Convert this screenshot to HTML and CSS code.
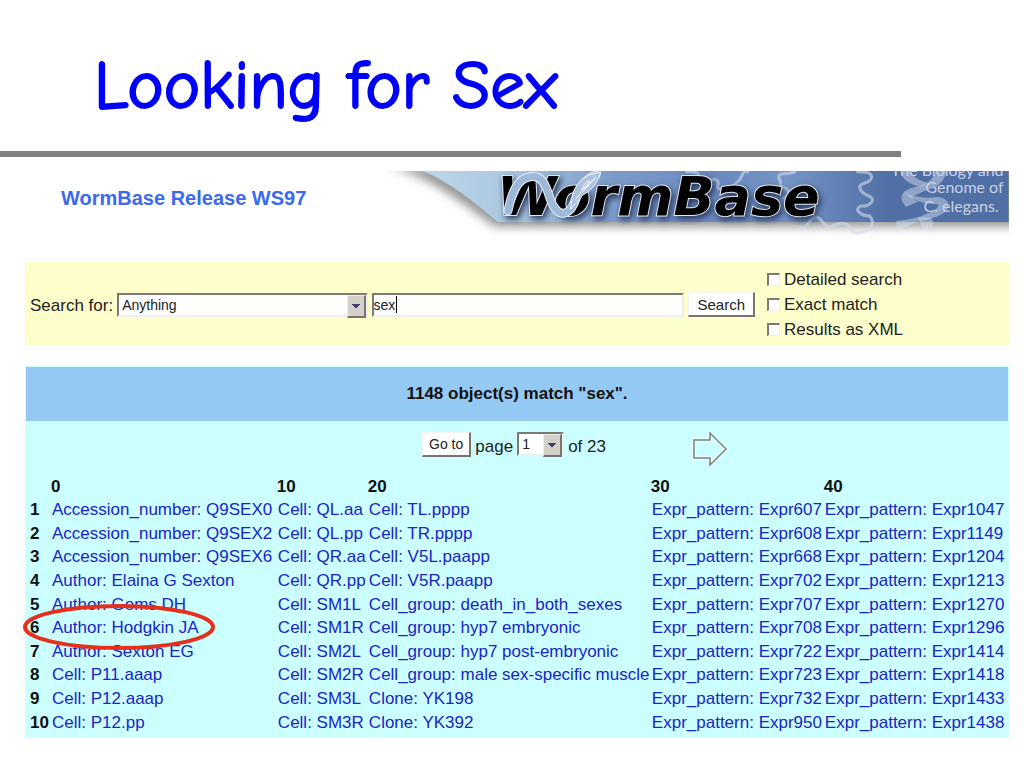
FILE: index.html
```html
<!DOCTYPE html>
<html lang="en">
<head>
    <meta charset="UTF-8">
    <meta name="viewport" content="width=device-width, initial-scale=1.0">
    <title>Looking for Sex</title>
    <link rel="stylesheet" href="styles.css">
</head>
<body>
    <header class="slide-header">
        <h1>Looking for Sex</h1>
    </header>

    <main class="content">
        <div class="banner">
            <h2>WormBase Release WS97</h2>
            <svg class="logo" viewBox="0 0 640 66" role="img" aria-label="WormBase">
                <defs>
                    <linearGradient id="sky" x1="0" x2="1">
                        <stop offset="0" stop-color="#bdd5e8"/>
                        <stop offset="0.15" stop-color="#abc8e0"/>
                        <stop offset="0.32" stop-color="#7d9bc9"/>
                        <stop offset="0.5" stop-color="#6b89bf"/>
                        <stop offset="0.62" stop-color="#7394c5"/>
                        <stop offset="0.8" stop-color="#506fa5"/>
                        <stop offset="1" stop-color="#506fa5"/>
                    </linearGradient>
                    <filter id="soft" x="-10%" y="-40%" width="120%" height="180%">
                        <feGaussianBlur stdDeviation="5"/>
                    </filter>
                </defs>
                <!-- drop shadow -->
                <path d="M15 -4C55 0 95 34 126 56H660V-4Z" fill="#999" filter="url(#soft)"/>
                <path d="M54 0H640V51H129C105 31 82 12 54 0Z" fill="url(#sky)"/>
                <!-- worm tracks -->
                <g fill="none" stroke="#d2dced" stroke-width="3" stroke-linecap="round" stroke-opacity="0.6">
                    <path d="M318 1Q330 0 330 5T342 9Q351 7 349 14T361 16Q370 12 373 5T379 1"/>
                    <path d="M426 1Q420 3 412 3Q408 5 412 11Q410 15 418 18Q423 24 415 27"/>
                    <path d="M489 1C509 0 504 11 496 12C486 15 493 22 500 25C509 29 500 36 492 35C484 39 493 45 501 45C508 52 501 60 493 61C486 64 482 60 480 55C475 49 466 54 463 55C455 58 454 47 448 46C441 44 439 60 432 56"/>
                </g>
                <!-- helix -->
                <g fill="#dce4f1" fill-opacity="0.45" transform="translate(515 -6) scale(0.333)">
                    <path d="M50 18H80Q86 40 132 54L112 66Q56 54 50 18Z"/>
                    <path d="M155 18H188Q184 52 150 68Q108 82 86 96Q86 104 104 110L68 126Q46 106 58 84Q72 68 112 62Q150 48 155 18Z"/>
                    <path d="M62 82Q100 104 168 96Q200 104 194 128Q184 152 130 164Q76 176 38 204V168Q96 164 140 142Q168 128 164 118Q96 118 62 82Z"/>
                    <path d="M104 158Q112 188 130 200Q144 194 150 174L142 158Z"/>
                </g>
                <g class="tagline">
                    <text x="635" y="5" text-anchor="end">The Biology and</text>
                    <text x="635" y="22" text-anchor="end">Genome of</text>
                    <text x="630" y="41" text-anchor="end">C. elegans.</text>
                </g>
                <text class="wordmark" x="128" y="44">WormBase</text>
                <!-- worm over the W and the o -->
                <g fill="none" stroke-linecap="round">
                    <path d="M139 40C143 20 149 8 160 6C178 2 178 24 184 34C193 50 203 40 207 28C211 15 217 8 227 4" stroke="#e7f0f8" stroke-width="9"/>
                    <path d="M139 40C143 20 149 8 160 6C178 2 178 24 184 34C193 50 203 40 207 28C211 15 217 8 227 4" stroke="#9db9da" stroke-width="7"/>
                    <path d="M203 27Q205 12 220 4L232 1Q227 18 214 24Q208 32 202 38Z" fill="#a9c1dd" stroke="#f2f7fb"/>
                    <path d="M213 18Q215 12 219 10T216 16T222 11T214 21M207 28L213 20" stroke="#f2f7fb"/>
                </g>
            </svg>
        </div>

        <form class="search" onsubmit="return false">
            <div class="search-fields">
                <label for="scope">Search for:</label>
                <span class="select-box scope-box">
                    <select id="scope">
                        <option>Anything</option>
                    </select>
                </span>
                <span class="query-box">
                    <input type="text" id="query" value="sex" aria-label="Query">
                    <span class="caret"></span>
                </span>
                <button type="submit" class="btn">Search</button>
            </div>
            <div class="options">
                <label><input type="checkbox" name="detailed">Detailed search</label>
                <label><input type="checkbox" name="exact">Exact match</label>
                <label><input type="checkbox" name="xml">Results as XML</label>
            </div>
        </form>

        <section class="results">
            <h3>1148 object(s) match "sex".</h3>
            <div class="pager">
                <div class="pager-form">
                    <button type="button" class="btn goto">Go to</button>
                    <label for="page">page</label>
                    <span class="select-box page-box">
                        <select id="page">
                            <option>1</option>
                        </select>
                    </span>
                    <span class="total">of 23</span>
                </div>
                <a class="next" href="#" aria-label="Next page">
                    <svg width="36" height="36" viewBox="0 0 36 36" fill="none">
                        <path d="M2 9H18V2L34 18L18 34V27H2Z" stroke="#fff" stroke-width="3"/>
                        <path d="M2 9H18V2L34 18L18 34V27H2Z" stroke="#777f7f" stroke-width="1.5"/>
                    </svg>
                </a>
            </div>
            <table>
                <colgroup>
                    <col class="col-row">
                    <col class="col-0">
                    <col class="col-10">
                    <col class="col-20">
                    <col class="col-30">
                    <col class="col-40">
                </colgroup>
                <thead>
                    <tr><th></th><th>0</th><th>10</th><th>20</th><th>30</th><th>40</th></tr>
                </thead>
                <tbody>
                    <tr><th>1</th><td><a href="#">Accession_number: Q9SEX0</a></td><td><a href="#">Cell: QL.aa</a></td><td><a href="#">Cell: TL.pppp</a></td><td><a href="#">Expr_pattern: Expr607</a></td><td><a href="#">Expr_pattern: Expr1047</a></td></tr>
                    <tr><th>2</th><td><a href="#">Accession_number: Q9SEX2</a></td><td><a href="#">Cell: QL.pp</a></td><td><a href="#">Cell: TR.pppp</a></td><td><a href="#">Expr_pattern: Expr608</a></td><td><a href="#">Expr_pattern: Expr1149</a></td></tr>
                    <tr><th>3</th><td><a href="#">Accession_number: Q9SEX6</a></td><td><a href="#">Cell: QR.aa</a></td><td><a href="#">Cell: V5L.paapp</a></td><td><a href="#">Expr_pattern: Expr668</a></td><td><a href="#">Expr_pattern: Expr1204</a></td></tr>
                    <tr><th>4</th><td><a href="#">Author: Elaina G Sexton</a></td><td><a href="#">Cell: QR.pp</a></td><td><a href="#">Cell: V5R.paapp</a></td><td><a href="#">Expr_pattern: Expr702</a></td><td><a href="#">Expr_pattern: Expr1213</a></td></tr>
                    <tr><th>5</th><td><a href="#">Author: Gems DH</a></td><td><a href="#">Cell: SM1L</a></td><td><a href="#">Cell_group: death_in_both_sexes</a></td><td><a href="#">Expr_pattern: Expr707</a></td><td><a href="#">Expr_pattern: Expr1270</a></td></tr>
                    <tr>
                        <th>6</th>
                        <td class="marked">
                            <a href="#">Author: Hodgkin JA</a>
                            <svg class="ring" width="192" height="48" viewBox="0 0 192 48"><ellipse cx="96" cy="24" rx="94" ry="21" fill="none" stroke="#e6301c" stroke-width="4"/></svg>
                        </td>
                        <td><a href="#">Cell: SM1R</a></td><td><a href="#">Cell_group: hyp7 embryonic</a></td><td><a href="#">Expr_pattern: Expr708</a></td><td><a href="#">Expr_pattern: Expr1296</a></td>
                    </tr>
                    <tr><th>7</th><td><a href="#">Author: Sexton EG</a></td><td><a href="#">Cell: SM2L</a></td><td><a href="#">Cell_group: hyp7 post-embryonic</a></td><td><a href="#">Expr_pattern: Expr722</a></td><td><a href="#">Expr_pattern: Expr1414</a></td></tr>
                    <tr><th>8</th><td><a href="#">Cell: P11.aaap</a></td><td><a href="#">Cell: SM2R</a></td><td><a href="#">Cell_group: male sex-specific muscle</a></td><td><a href="#">Expr_pattern: Expr723</a></td><td><a href="#">Expr_pattern: Expr1418</a></td></tr>
                    <tr><th>9</th><td><a href="#">Cell: P12.aaap</a></td><td><a href="#">Cell: SM3L</a></td><td><a href="#">Clone: YK198</a></td><td><a href="#">Expr_pattern: Expr732</a></td><td><a href="#">Expr_pattern: Expr1433</a></td></tr>
                    <tr><th>10</th><td><a href="#">Cell: P12.pp</a></td><td><a href="#">Cell: SM3R</a></td><td><a href="#">Clone: YK392</a></td><td><a href="#">Expr_pattern: Expr950</a></td><td><a href="#">Expr_pattern: Expr1438</a></td></tr>
                </tbody>
            </table>
        </section>
    </main>
</body>
</html>
```
FILE: styles.css
```css
* {
    margin: 0;
    padding: 0;
    box-sizing: border-box;
}

body {
    font-family: "Liberation Sans", Arial, sans-serif;
    font-size: 17px;
    line-height: 24px;
    color: #222;
    background: #fff;
}

.slide-header {
    width: 88%;
    padding: 44px 0 23px 94px;
    border-bottom: 6px solid #808080;
}

.slide-header h1 {
    font-family: "Comic Sans MS", "Comic Neue", Lato, sans-serif;
    font-size: 69px;
    font-weight: 400;
    line-height: 84px;
    color: #0000fa;
    -webkit-text-stroke: 2px #0000fa;
}

.content {
    padding: 14px 15px 28px 25px;
}

/* Banner */

.banner {
    display: flex;
    justify-content: space-between;
}

.banner h2 {
    padding: 15px 0 0 36px;
    font-size: 20px;
    color: #3b6af0;
    white-space: nowrap;
}

.logo {
    width: 65%;
    display: block;
}

.wordmark {
    font-family: "DejaVu Sans", Verdana, sans-serif;
    font-size: 54px;
    font-weight: bold;
    font-style: oblique;
    fill: #000;
    stroke: #dfe7f2;
    stroke-width: 2px;
    paint-order: stroke;
    filter: drop-shadow(2px 3px 3px #26375c);
}

.tagline {
    font-family: Lato, sans-serif;
    font-size: 16px;
    fill: #c9d3e5;
}

/* Search form */

.search {
    display: flex;
    align-items: center;
    gap: 12px;
    margin-top: 25px;
    padding: 6px 5px 4px;
    background: #ffffcc;
}

.search-fields {
    flex: 1;
    display: flex;
    align-items: center;
    gap: 4px;
}

.search-fields label {
    padding-top: 2px;
    white-space: nowrap;
}

.select-box,
.query-box {
    position: relative;
    display: inline-flex;
}

.scope-box {
    flex: 4;
}

.query-box {
    flex: 5;
}

select,
input[type="text"] {
    width: 100%;
    height: 24px;
    font: 14px "Liberation Sans", Arial, sans-serif;
    color: #222;
    background: #fff;
    border: 2px solid #eee;
    border-top: 2px solid #7c7a76;
    border-left: 2px solid #7c7a76;
    border-radius: 0;
    appearance: none;
}

select {
    padding-left: 3px;
}

.select-box::after {
    content: "";
    position: absolute;
    top: 2px;
    right: 2px;
    width: 16px;
    height: 20px;
    background: conic-gradient(from 315deg at 50% 100%, #3f3d70 90deg, #d3cfc9 0) center / 8px 4px no-repeat, #d3cfc9;
    border: 1px solid #eee;
    border-right: 2px solid #77746f;
    border-bottom: 2px solid #77746f;
    pointer-events: none;
}

.caret {
    position: absolute;
    left: 24px;
    top: 3px;
    width: 1px;
    height: 17px;
    background: #000;
}

.btn {
    height: 25px;
    padding: 0 8px;
    font: 15px "Liberation Sans", Arial, sans-serif;
    color: #222;
    background: #fff;
    border: 1px solid #f2f2f2;
    border-right: 2px solid #77746f;
    border-bottom: 2px solid #77746f;
}

.options {
    display: grid;
    gap: 1px;
    width: 237px;
}

.options label {
    display: flex;
    align-items: center;
    gap: 4px;
}

.options input {
    width: 13px;
    height: 13px;
    background: #fff;
    border: 1px solid #eee;
    border-top: 2px solid #7c7a76;
    border-left: 2px solid #7c7a76;
    appearance: none;
}

/* Results */

.results {
    margin-top: 20px;
    background: #ccffff;
    border: 1px solid #ccffff;
    padding-bottom: 3px;
}

.results h3 {
    padding: 15px 0;
    font-size: 17px;
    text-align: center;
    color: #111;
    background: #94c9f3;
}

.pager {
    display: grid;
    grid-template-columns: 1fr auto 1fr;
    align-items: center;
    padding: 4px 0 8px;
}

.pager-form {
    grid-column: 2;
    display: flex;
    align-items: flex-start;
    gap: 4px;
    margin-right: 6px;
}

.pager-form label,
.total {
    padding-top: 3px;
}

.goto {
    padding: 0 6px;
    font-size: 14px;
}

.page-box {
    width: 47px;
}

.next {
    height: 36px;
    margin: 6px 0 0 80px;
}

table {
    width: 100%;
    height: 259px;
    table-layout: fixed;
    border-collapse: collapse;
}

th {
    text-align: left;
    color: #111;
}

thead th,
tbody td,
tbody th {
    height: 23px;
    line-height: 23px;
    white-space: nowrap;
}

tbody th {
    padding-left: 4px;
}

td {
    padding-left: 1px;
}

.col-row {
    width: 25px;
}

.col-0 {
    width: 23%;
}

.col-10 {
    width: 91px;
}

.col-20 {
    width: 283px;
}

.col-30 {
    width: 173px;
}

td a {
    color: #1a24c8;
    text-decoration: none;
}

.marked {
    position: relative;
}

.ring {
    position: absolute;
    left: -28px;
    top: -13px;
    pointer-events: none;
}
```
